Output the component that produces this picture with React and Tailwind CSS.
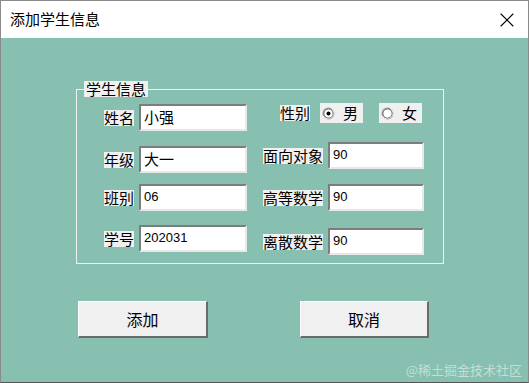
import { X } from 'lucide-react'

const cjk = { fontFamily: '"Noto Sans CJK SC", "Noto Sans", sans-serif' }

function Label({ children, className = '' }) {
  return (
    <span
      style={cjk}
      className={`bg-[#f0f0f0] text-[15px] leading-[16px] text-black whitespace-nowrap ${className}`}
    >
      {children}
    </span>
  )
}

function Field({ value, width }) {
  const isCjk = /[^\x00-\x7f]/.test(value)
  return (
    <input
      readOnly
      defaultValue={value}
      style={{ fontFamily: '"Liberation Sans", "Noto Sans CJK SC", sans-serif' }}
      className={`${width} ${isCjk ? 'text-[15px]' : 'text-[13px]'} h-[27px] bg-white pl-[3px] pb-[2px] text-black outline-none border-2 border-t-[#7d7d7d] border-l-[#7d7d7d] border-b-[#e8e8e8] border-r-[#e8e8e8]`}
    />
  )
}

function Row({ label, value, width, labelWidth, className = '' }) {
  return (
    <div className={`flex items-center ${className}`}>
      <div className={`${labelWidth} flex justify-end`}>
        <Label>{label}</Label>
      </div>
      <div className="w-[5px]" />
      <Field value={value} width={width} />
    </div>
  )
}

function Radio({ label, checked }) {
  return (
    <div className="w-[43px] h-[20px] bg-[#f0f0f0] flex items-center pl-[2px] gap-[8px]">
      <svg width="13" height="13" viewBox="0 0 13 13">
        <circle cx="6.5" cy="6.5" r="6" fill="#a0a0a0" />
        <path d="M1 9 A6 6 0 0 0 12 6.5 A6 6 0 0 0 9.5 1.4" fill="none" stroke="#f5f5f5" strokeWidth="1" />
        <circle cx="6.5" cy="6.5" r="4.6" fill="#fff" stroke="#5a5a5a" strokeWidth="0.8" />
        {checked && <circle cx="6.5" cy="6.5" r="2" fill="#000" />}
      </svg>
      <span style={cjk} className="text-[15px] leading-[16px] text-black">{label}</span>
    </div>
  )
}

function Button({ children, width }) {
  return (
    <button
      style={cjk}
      className={`${width} h-[37px] bg-[#f0f0f0] text-[16px] text-black border-t border-l border-t-white border-l-white border-b-2 border-r-2 border-b-[#6a6a6a] border-r-[#6a6a6a]`}
    >
      {children}
    </button>
  )
}

export default function App() {
  return (
    <div className="relative w-[529px] h-[383px] flex flex-col border border-[#8a8a8a] border-b-[#555] overflow-hidden">
      <div className="h-[37px] shrink-0 bg-white flex items-center justify-between pl-[9px] pr-[9px]">
        <span style={cjk} className="text-[15px] text-black">添加学生信息</span>
        <X size={24} strokeWidth={1.1} className="text-black" />
      </div>

      <div className="flex-1 bg-[#87bfb0] pt-[51px] pl-[75px]">
        <div className="relative w-[368px] h-[175px] border border-[#eef3f1] flex pl-[26px]">
          <Label className="absolute left-[7px] top-[-9px] px-[2px]">学生信息</Label>

          <div className="flex flex-col pt-[14px]">
            <Row label="姓名" value="小强" labelWidth="w-[31px]" width="w-[108px]" />
            <Row label="年级" value="大一" labelWidth="w-[31px]" width="w-[108px]" className="mt-[15px]" />
            <Row label="班别" value="06" labelWidth="w-[31px]" width="w-[108px]" className="mt-[11px]" />
            <Row label="学号" value="202031" labelWidth="w-[31px]" width="w-[108px]" className="mt-[14px]" />
          </div>

          <div className="flex flex-col pt-[13px] ml-[17px]">
            <div className="flex items-center pl-[16px]">
              <Label>性别</Label>
              <div className="ml-[10px]">
                <Radio label="男" checked />
              </div>
              <div className="ml-[16px]">
                <Radio label="女" />
              </div>
            </div>
            <Row label="面向对象" value="90" labelWidth="w-[59px]" width="w-[96px]" className="mt-[19px]" />
            <Row label="高等数学" value="90" labelWidth="w-[59px]" width="w-[96px]" className="mt-[15px]" />
            <Row label="离散数学" value="90" labelWidth="w-[59px]" width="w-[96px]" className="mt-[17px]" />
          </div>
        </div>

        <div className="flex mt-[37px] pl-[2px] gap-[92px]">
          <Button width="w-[130px]">添加</Button>
          <Button width="w-[129px]">取消</Button>
        </div>
      </div>

      <span
        style={cjk}
        className="absolute right-[6px] bottom-[3px] text-[13px] text-white/50"
      >
        @稀土掘金技术社区
      </span>
    </div>
  )
}
